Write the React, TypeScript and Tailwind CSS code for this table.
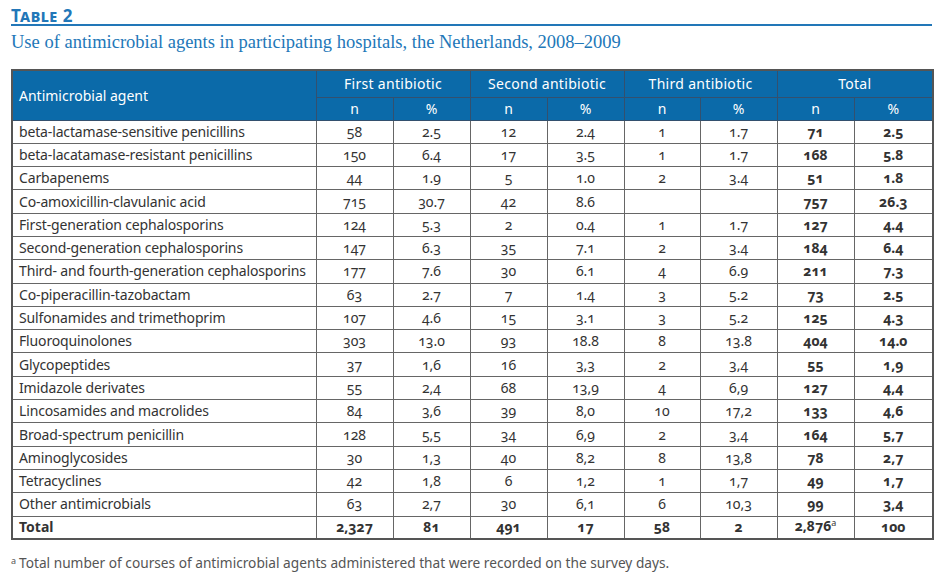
import React from "react";

type Row = { name: string; v: string[] };

const rows: Row[] = [
  { name: "beta-lactamase-sensitive penicillins", v: ["58", "2.5", "12", "2.4", "1", "1.7", "71", "2.5"] },
  { name: "beta-lacatamase-resistant penicillins", v: ["150", "6.4", "17", "3.5", "1", "1.7", "168", "5.8"] },
  { name: "Carbapenems", v: ["44", "1.9", "5", "1.0", "2", "3.4", "51", "1.8"] },
  { name: "Co-amoxicillin-clavulanic acid", v: ["715", "30.7", "42", "8.6", "", "", "757", "26.3"] },
  { name: "First-generation cephalosporins", v: ["124", "5.3", "2", "0.4", "1", "1.7", "127", "4.4"] },
  { name: "Second-generation cephalosporins", v: ["147", "6.3", "35", "7.1", "2", "3.4", "184", "6.4"] },
  { name: "Third- and fourth-generation cephalosporins", v: ["177", "7.6", "30", "6.1", "4", "6.9", "211", "7.3"] },
  { name: "Co-piperacillin-tazobactam", v: ["63", "2.7", "7", "1.4", "3", "5.2", "73", "2.5"] },
  { name: "Sulfonamides and trimethoprim", v: ["107", "4.6", "15", "3.1", "3", "5.2", "125", "4.3"] },
  { name: "Fluoroquinolones", v: ["303", "13.0", "93", "18.8", "8", "13.8", "404", "14.0"] },
  { name: "Glycopeptides", v: ["37", "1,6", "16", "3,3", "2", "3,4", "55", "1,9"] },
  { name: "Imidazole derivates", v: ["55", "2,4", "68", "13,9", "4", "6,9", "127", "4,4"] },
  { name: "Lincosamides and macrolides", v: ["84", "3,6", "39", "8,0", "10", "17,2", "133", "4,6"] },
  { name: "Broad-spectrum penicillin", v: ["128", "5,5", "34", "6,9", "2", "3,4", "164", "5,7"] },
  { name: "Aminoglycosides", v: ["30", "1,3", "40", "8,2", "8", "13,8", "78", "2,7"] },
  { name: "Tetracyclines", v: ["42", "1,8", "6", "1,2", "1", "1,7", "49", "1,7"] },
  { name: "Other antimicrobials", v: ["63", "2,7", "30", "6,1", "6", "10,3", "99", "3,4"] },
];

const colW = [304, 77, 77, 77, 77, 76, 77, 77, 79];

export default function App() {
  return (
    <div
      className="w-[941px] h-[574px] bg-white pl-[11px] pr-[9px] pt-[7px] text-[#333]"
      style={{ fontFamily: '"Noto Sans", "Open Sans", sans-serif' }}
    >
      <div className="h-[19px] border-b-2 border-[#2277b8] text-[#2277b8] font-bold text-[17px] leading-[17px] [font-variant:small-caps] tracking-[0.5px]">
        Table 2
      </div>
      <div
        className="h-[29px] leading-[32px] text-[18.5px] text-[#2277b8]"
        style={{ fontFamily: '"Liberation Serif", serif' }}
      >
        Use of antimicrobial agents in participating hospitals, the Netherlands, 2008–2009
      </div>
      <table className="mt-[14px] border-collapse border-2 border-[#555] table-fixed w-[921px] text-[14px] oldstyle-nums">
        <colgroup>
          {colW.map((w, i) => (
            <col key={i} style={{ width: w }} />
          ))}
        </colgroup>
        <thead className="bg-[#0b6aa9] text-white">
          <tr className="h-[27px]">
            <th rowSpan={2} className="text-left font-normal pl-[6px] border border-[#33506e]">
              Antimicrobial agent
            </th>
            <th colSpan={2} className="font-normal border border-[#33506e] tracking-[0.3px]">First antibiotic</th>
            <th colSpan={2} className="font-normal border border-[#33506e] tracking-[0.3px]">Second antibiotic</th>
            <th colSpan={2} className="font-normal border border-[#33506e] tracking-[0.3px]">Third antibiotic</th>
            <th colSpan={2} className="font-normal border border-[#33506e] tracking-[0.3px]">Total</th>
          </tr>
          <tr className="h-[23px]">
            {["n", "%", "n", "%", "n", "%", "n", "%"].map((t, i) => (
              <th key={i} className="font-normal border border-[#33506e]">
                {t}
              </th>
            ))}
          </tr>
        </thead>
        <tbody>
          {rows.map((r, i) => (
            <tr key={i} className="h-[23.3px]">
              <td className="pl-[6px] border border-[#666] whitespace-nowrap leading-[18px] tracking-[-0.15px]">{r.name}</td>
              {r.v.map((x, j) => (
                <td
                  key={j}
                  className={`text-center border border-[#666] leading-[18px] ${j >= 6 ? "font-bold" : ""}`}
                >
                  {x}
                </td>
              ))}
            </tr>
          ))}
          <tr className="h-[23.3px] font-bold">
            <td className="pl-[6px] border border-[#666] leading-[18px]">Total</td>
            <td className="text-center border border-[#666] leading-[18px]">2,327</td>
            <td className="text-center border border-[#666] leading-[18px]">81</td>
            <td className="text-center border border-[#666] leading-[18px]">491</td>
            <td className="text-center border border-[#666] leading-[18px]">17</td>
            <td className="text-center border border-[#666] leading-[18px]">58</td>
            <td className="text-center border border-[#666] leading-[18px]">2</td>
            <td className="text-center border border-[#666] leading-[18px]">
              2,876<span className="relative -top-[5px] text-[9px] font-normal">a</span>
            </td>
            <td className="text-center border border-[#666] leading-[18px]">100</td>
          </tr>
        </tbody>
      </table>
      <div className="mt-[14px] text-[13.7px] text-[#555] leading-[18px]">
        <span className="relative -top-[4px] text-[9px] mr-[3px]">a</span>Total number of courses of antimicrobial agents administered that were recorded on the survey days.
      </div>
    </div>
  );
}
